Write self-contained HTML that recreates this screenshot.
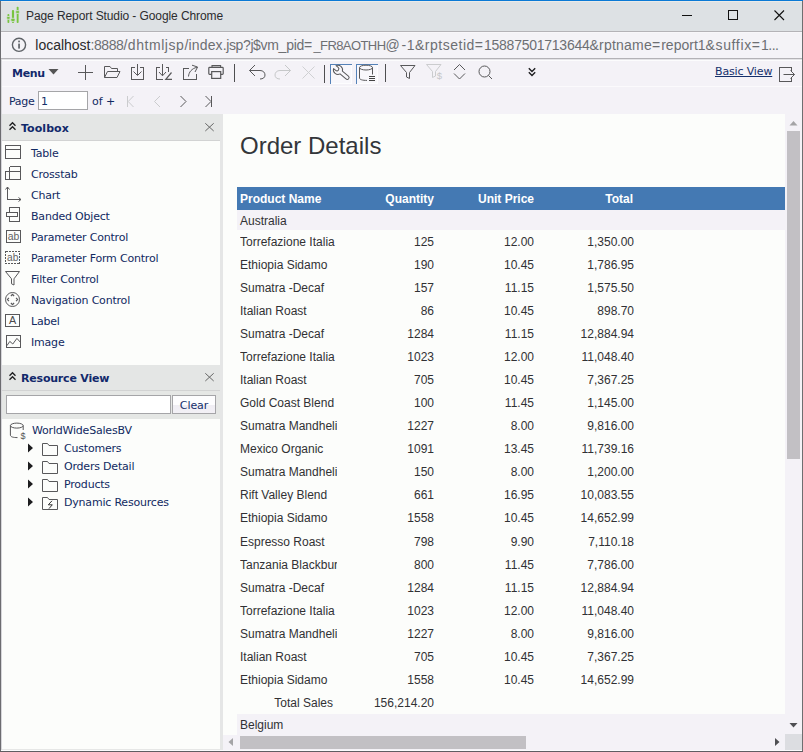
<!DOCTYPE html>
<html>
<head>
<meta charset="utf-8">
<title>Page Report Studio</title>
<style>
*{box-sizing:border-box;margin:0;padding:0}
html,body{width:803px;height:752px;overflow:hidden;background:#f4f2f7}
body{position:relative;font-family:"DejaVu Sans","Liberation Sans",sans-serif;font-size:11px;color:#15306b}
.abs{position:absolute}
#win{position:absolute;left:0;top:0;width:803px;height:752px;overflow:hidden;background:#f4f2f7}
/* chrome frame */
#topline{left:0;top:0;width:803px;height:2px;background:linear-gradient(#0b79d5 0,#0b79d5 50%,#eaebe9 50%)}
#titlebar{left:1px;top:1px;width:801px;height:30px;background:#dde1e4}
#title{left:26px;top:9px;font:12px "Liberation Sans",sans-serif;color:#2c2c2e;white-space:nowrap;letter-spacing:-0.09px}
#sep1{left:1px;top:31px;width:801px;height:1px;background:#b4b3b7}
#urlbar{left:1px;top:32px;width:801px;height:26px;background:#f4f3f7;border-top:1px solid #f8f7fa}
#url{left:0;top:37px;width:803px;height:18px;font:14px "Liberation Sans",sans-serif;color:#6d6f73}
#url span{position:absolute;top:0;white-space:pre}
#sep2{left:1px;top:58px;width:801px;height:3px;background:linear-gradient(#b3b2b6 0,#b3b2b6 33.3%,#e3e3e6 33.4%,#e3e3e6 66.6%,#fcfcfd 66.7%)}
#lborder{left:0;top:1px;width:1px;height:751px;background:#6c6c70}
#lborder2{left:1px;top:59px;width:1px;height:692px;background:#d6d6da}
#rborder{left:802px;top:1px;width:1px;height:751px;background:#6e6e70}
#bborder{left:0;top:751px;width:803px;height:1px;background:#5f5d61}
#bborder2{left:1px;top:750px;width:801px;height:1px;background:#fbfbfc}
/* toolbar */
#toolbar{left:2px;top:61px;width:799px;height:25px;background:#f4f2f7}
#menu{left:12px;top:67px;font-weight:bold;font-size:11px;color:#12296b;letter-spacing:-0.3px}
#basic{left:715px;top:65px;font-size:11px;color:#15306b;text-decoration:underline;white-space:nowrap;letter-spacing:-0.15px}
#pagerow{left:2px;top:87px;width:799px;height:27px}
.nav{font-size:11px;color:#112a62;white-space:nowrap}
#pinput{left:38px;top:91px;width:50px;height:19px;border:1px solid #a5a5a8;background:#fff;font-size:11px;color:#15306b;padding:3px 0 0 2px}
/* left panel */
#left{left:2px;top:114px;width:218px;height:636px;background:#fcfdfb;border-bottom:1px solid #e6e7e6}
#lsplit{left:220px;top:114px;width:3px;height:636px;background:#e5e6e6}
.phead{left:2px;width:218px;height:27px;background:#e4e6e5;border-bottom:1px solid #d2d3d3}
.ptitle{font-weight:bold;font-size:11px;color:#12296b;white-space:nowrap;letter-spacing:0.05px}
.item{left:31px;font-size:11px;color:#112a62;white-space:nowrap;letter-spacing:-0.2px}
/* report */
#page{left:223px;top:114px;width:562px;height:621px;background:#fcfdfb}
#rtitle{left:240px;top:132px;font:24px "Liberation Sans",sans-serif;color:#33363a;white-space:nowrap}
#thead{left:237px;top:187px;width:548px;height:23px;background:#4479b3}
.th{top:192px;font:bold 12px "Liberation Sans",sans-serif;color:#fff;white-space:nowrap}
.grp{left:237px;width:548px;height:20px;background:#f4f2f7}
.r{font:12px "Liberation Sans",sans-serif;color:#313134;white-space:nowrap}
.c1{left:240px;width:97px;overflow:hidden;text-align:left}
.c2{left:337px;width:97px;text-align:right}
.c3{left:437px;width:97px;text-align:right}
.c4{left:537px;width:97px;text-align:right}
</style>
</head>
<body>
<div id="win">
<div class="abs" id="titlebar"></div>
<div class="abs" id="topline"></div>
<div class="abs" id="title">Page Report Studio - Google Chrome</div>
<div class="abs" id="sep1"></div>
<div class="abs" id="urlbar"></div>
<div class="abs" id="url"><span style="left:35.3px;letter-spacing:-0.01px;color:#2a2a2c">localhost</span><span style="left:90.5px;letter-spacing:-0.43px">:8888</span><span style="left:123.4px;letter-spacing:0.55px">/dhtmljsp</span><span style="left:184.4px;letter-spacing:0.17px">/index</span><span style="left:222.8px;letter-spacing:-0.40px">.jsp</span><span style="left:243.0px;letter-spacing:-0.40px">?j$</span><span style="left:260.5px;letter-spacing:-0.27px">vm_pid</span><span style="left:304.0px;letter-spacing:1.21px">=</span><span style="left:313.4px;letter-spacing:-0.58px;font-size:13px;top:1px">_FR8AOTHH</span><span style="left:385.5px;letter-spacing:1.78px">@</span><span style="left:401.5px;letter-spacing:0.52px">-1</span><span style="left:415.0px;letter-spacing:0.51px">&amp;rptsetid</span><span style="left:474.8px;letter-spacing:1.01px">=</span><span style="left:484.0px;letter-spacing:-0.25px">15887501713644</span><span style="left:589.5px;letter-spacing:0.22px">&amp;rptname</span><span style="left:652.0px;letter-spacing:1.01px">=</span><span style="left:661.2px;letter-spacing:0.01px">report1</span><span style="left:705.6px;letter-spacing:0.63px">&amp;suffix</span><span style="left:751.8px;letter-spacing:1.01px">=</span><span style="left:761.0px;letter-spacing:-0.49px">1...</span></div>
<div class="abs" id="sep2"></div>
<div class="abs" id="toolbar"></div>
<div class="abs" style="left:1px;top:86px;width:801px;height:1px;background:#fbfafc"></div>
<div class="abs" id="menu">Menu</div>
<div class="abs" id="basic">Basic View</div>
<svg class="abs" style="left:0;top:0" width="803" height="120" viewBox="0 0 803 120" fill="none" stroke="#58585a" stroke-width="1">
<!-- menu arrow -->
<path d="M48.5 69 H58.5 L53.5 74.5 Z" fill="#555" stroke="none"/>
<!-- plus -->
<path d="M78 72.5 H93 M85.5 65 V80" shape-rendering="crispEdges"/>
<!-- folder open -->
<path d="M104.5 77.5 V66.5 H110 L111.5 68.5 H117.5 V71.5 M104.5 77.5 L107.5 71.5 H120 L117 77.5 Z" stroke-linejoin="round"/>
<!-- save -->
<path d="M135 67.5 H131.5 V79.5 H143.5 V67.5 H140" shape-rendering="crispEdges"/>
<path d="M137.5 64 V75 M133.5 71.5 L137.5 75.5 L141.5 71.5"/>
<!-- save as -->
<path d="M160 67.5 H156.5 V79.5 H163 M165.5 67.5 H168.5 V72" shape-rendering="crispEdges"/>
<path d="M162.5 64 V75.5 M159 72 L162.5 75.8 L166 72"/>
<path d="M171.5 72.5 L165.8 79.3 H172" stroke-width="1.2"/>
<!-- export -->
<path d="M189 68.5 H183.5 V79.5 H196.5 V74" shape-rendering="crispEdges"/>
<path d="M188.5 76.5 C188.8 72 191.8 68.6 197 67.2 M192 65.2 L197.6 67 L195 72"/>
<!-- print -->
<path d="M212 67 V65.6 H220.6 V67" stroke-width="1.1"/>
<rect x="208.8" y="67.4" width="14.4" height="7" rx="0.8" stroke-width="1.2"/>
<rect x="211.7" y="71.6" width="9" height="6.8" fill="#f4f2f7" stroke-width="1.2"/>
<!-- sep -->
<path d="M234.5 64 V82 M324.5 65 V83 M385.5 64 V82" stroke="#4e4e50" shape-rendering="crispEdges"/>
<!-- undo -->
<path d="M255 65 L249.5 70.5 L255 76 M249.5 70.5 H260 C263.2 70.5 265 72.6 265 75 C265 77.6 263 79 260 79"/>
<!-- redo (disabled) -->
<path d="M285 65 L290.5 70.5 L285 76 M290.5 70.5 H280 C276.8 70.5 275 72.6 275 75 C275 77.6 277 79 280 79" stroke="#c6c8c9"/>
<!-- delete (disabled) -->
<path d="M302.5 66.5 L314.5 78.5 M314.5 66.5 L302.5 78.5" stroke="#cfd0d2"/>
<!-- toggled buttons -->
<rect x="330" y="64" width="22" height="20" fill="#f8f7fb" stroke="none"/>
<path d="M330.5 84 V64.5 H352" stroke="#5582b8" shape-rendering="crispEdges"/>
<path d="M331 83.5 H351.5 V65" stroke="#fdfdfe" shape-rendering="crispEdges"/>
<rect x="356" y="64" width="22" height="20" fill="#f8f7fb" stroke="none"/>
<path d="M356.5 84 V64.5 H378" stroke="#5582b8" shape-rendering="crispEdges"/>
<path d="M357 83.5 H377.5 V65" stroke="#fdfdfe" shape-rendering="crispEdges"/>
<!-- wrench -->
<g transform="translate(338 69.8) rotate(40)">
<path d="M-4.2 -1.9 A4.6 4.6 0 0 1 4.2 -1.8 L12 -1.9 A1.9 1.9 0 0 1 12 1.9 L4.2 1.8 A4.6 4.6 0 0 1 -4.2 1.9 L-1.4 1.9 A1.9 1.9 0 0 0 -1.4 -1.9 Z" stroke-linejoin="round"/>
</g>
<!-- db -->
<ellipse cx="366" cy="67.6" rx="6.5" ry="2.4"/>
<path d="M359.5 67.6 V78 C359.5 79.6 362.5 80.4 367 80.4 M372.5 67.6 V74.5"/>
<path d="M369 76.5 H375 M369 78.5 H375 M369 80.5 H375" stroke="#444" shape-rendering="crispEdges"/>
<!-- filter -->
<path d="M400.5 65.5 H415 L409.5 72.5 V78.5 L406.5 77 V72.5 Z" stroke-linejoin="round"/>
<!-- filter $ (disabled) -->
<path d="M426.5 64.5 H441 L435.5 71.5 V76 L432.5 77.5 V71.5 Z" stroke="#cbccce" stroke-linejoin="round"/>
<text x="436.8" y="78.6" font-family="Liberation Sans, sans-serif" font-size="9.5" fill="#c6c7ca" stroke="none">$</text>
<!-- sort -->
<path d="M454 70 L459.5 64.5 L465 70 M454 73.5 L459.5 79 L465 73.5"/>
<!-- search -->
<circle cx="484.5" cy="71.5" r="5.5"/>
<path d="M488.5 75.5 L492 79"/>
<!-- more -->
<path d="M528.8 68.2 L532 71.4 L535.2 68.2 M528.8 72.2 L532 75.4 L535.2 72.2" stroke="#1d1d1f" stroke-width="1.4"/>
<!-- exit -->
<path d="M791.5 71 V67.5 H779.5 V81.5 H791.5 V78" shape-rendering="crispEdges"/>
<path d="M783.5 74.5 H794.5 M790.5 70.5 L794.5 74.5 L790.5 78.5"/>
<!-- page nav -->
<path d="M127.5 96 V107" stroke="#cbccce" shape-rendering="crispEdges"/>
<path d="M133.5 96 L128.2 101.5 L133.5 107 M160 96 L154.5 101.5 L160 107" stroke="#cbccce"/>
<path d="M180.5 96 L186 101.5 L180.5 107 M205.5 96 L211 101.5 L205.5 107"/>
<path d="M211.5 96 V107" shape-rendering="crispEdges"/>
</svg>

<div class="abs nav" style="left:9px;top:95px;letter-spacing:-0.3px">Page</div>
<div class="abs" id="pinput">1</div>
<div class="abs nav" style="left:92px;top:95px">of +</div>

<div class="abs" id="left"></div>
<div class="abs" id="lsplit"></div>
<div class="abs phead" style="top:114px"></div>
<div class="abs ptitle" style="left:21px;top:122px">Toolbox</div>
<div class="abs item" style="top:147px">Table</div>
<div class="abs item" style="top:168px">Crosstab</div>
<div class="abs item" style="top:189px">Chart</div>
<div class="abs item" style="top:210px">Banded Object</div>
<div class="abs item" style="top:231px">Parameter Control</div>
<div class="abs item" style="top:252px">Parameter Form Control</div>
<div class="abs item" style="top:273px">Filter Control</div>
<div class="abs item" style="top:294px">Navigation Control</div>
<div class="abs item" style="top:315px">Label</div>
<div class="abs item" style="top:336px">Image</div>
<svg class="abs" style="left:0;top:114px" width="224" height="250" viewBox="0 114 224 250" fill="none" stroke="#58585a" stroke-width="1">
<!-- collapse chevrons -->
<path d="M9.5 125.7 L12.5 122.7 L15.5 125.7 M9.5 129.7 L12.5 126.7 L15.5 129.7" stroke="#1d1d1f" stroke-width="1.3"/>
<!-- close x -->
<path d="M205.3 123.3 L213.7 131 M213.7 123.3 L205.3 131" stroke="#666"/>
<!-- table -->
<path d="M5.5 145.5 H20.5 V158.5 H5.5 Z M5.5 149.5 H20.5" shape-rendering="crispEdges"/>
<!-- crosstab -->
<path d="M9.5 166.5 H20.5 V179.5 H5.5 V171.5 H20.5 M9.5 166.5 V179.5" shape-rendering="crispEdges"/>
<!-- chart -->
<path d="M7.5 187 V199.5 H21" shape-rendering="crispEdges"/>
<path d="M5.5 189.5 L7.5 187 L9.5 189.5 M18.5 197.5 L21 199.5 L18.5 201.5"/>
<!-- banded -->
<path d="M9.5 207.5 H19.5 V221.5 H9.5 Z" shape-rendering="crispEdges"/>
<path d="M6.5 212.5 H17.5 V216.5 H6.5 Z" fill="#fcfdfb" shape-rendering="crispEdges"/>
<!-- param -->
<path d="M6.5 230.5 H20.5 V242.5 H6.5 Z" shape-rendering="crispEdges"/>
<text x="7.7" y="240.2" font-family="Liberation Sans, sans-serif" font-size="10.4" fill="#636365" stroke="none">ab</text>
<!-- param form -->
<path d="M5.5 251.5 H19.5 V263.5 H5.5 Z" stroke-dasharray="2 1" shape-rendering="crispEdges"/>
<text x="7" y="261.2" font-family="Liberation Sans, sans-serif" font-size="10.2" fill="#636365" stroke="none">ab</text>
<!-- filter -->
<path d="M5.5 271.5 H19.5 L14 278.8 V285 L11.5 283.8 V278.8 Z" stroke-linejoin="round"/>
<!-- navigation -->
<circle cx="12.5" cy="299.5" r="7"/>
<path d="M10.9 296 L12.5 294.3 L14.1 296 M10.9 303 L12.5 304.7 L14.1 303 M9 297.9 L7.3 299.5 L9 301.1 M16 297.9 L17.7 299.5 L16 301.1" stroke-width="1.1"/>
<!-- label -->
<path d="M5.5 314.5 H19.5 V326.5 H5.5 Z" shape-rendering="crispEdges"/>
<text x="8.9" y="324.4" font-family="Liberation Sans, sans-serif" font-size="10.8" fill="#4a4a4c" stroke="none">A</text>
<!-- image -->
<path d="M6.5 335.5 H20.5 V347.5 H6.5 Z" shape-rendering="crispEdges"/>
<path d="M6.9 345.7 L9.8 341.4 L12.8 344 L16.9 338.4 L20.2 342"/>
</svg>

<div class="abs phead" style="top:365px;height:26px"></div>
<div class="abs ptitle" style="left:21px;top:372px;letter-spacing:-0.2px">Resource View</div>
<div class="abs" style="left:2px;top:391px;width:218px;height:28px;background:#e5e7e5"></div>
<div class="abs" style="left:6px;top:395px;width:165px;height:19px;border:1px solid #a5a5a8;background:#fff"></div>
<div class="abs" style="left:172px;top:395px;width:44px;height:19px;border:1px solid #a5a5a8;background:linear-gradient(#fdfdfe 0,#fdfdfe 50%,#efedf3 51%,#f3f1f6 100%);font-size:11px;color:#15306b;text-align:center;padding-top:3px;letter-spacing:-0.1px">Clear</div>
<div class="abs item" style="left:32px;top:424px">WorldWideSalesBV</div>
<div class="abs item" style="left:64px;top:442px">Customers</div>
<div class="abs item" style="left:64px;top:460px">Orders Detail</div>
<div class="abs item" style="left:64px;top:478px">Products</div>
<div class="abs item" style="left:64px;top:496px">Dynamic Resources</div>
<svg class="abs" style="left:0;top:364px" width="224" height="160" viewBox="0 364 224 160" fill="none" stroke="#58585a" stroke-width="1">
<path d="M9.5 375.7 L12.5 372.7 L15.5 375.7 M9.5 379.7 L12.5 376.7 L15.5 379.7" stroke="#1d1d1f" stroke-width="1.3"/>
<path d="M205.3 373.3 L213.7 381 M213.7 373.3 L205.3 381" stroke="#666"/>
<!-- db $ -->
<ellipse cx="16.8" cy="425.6" rx="6.4" ry="2.5"/>
<path d="M10.4 425.6 V435 C10.4 436.8 13 437.6 17.5 437.6 M23.2 425.6 V430"/>
<text x="20.6" y="438.6" font-family="Liberation Sans, sans-serif" font-size="9" fill="#555" stroke="none">$</text>
<!-- tree arrows -->
<path d="M28 443.5 L33 448 L28 452.5 Z M28 461.5 L33 466 L28 470.5 Z M28 479.5 L33 484 L28 488.5 Z M28 497.5 L33 502 L28 506.5 Z" fill="#1d1d1f" stroke="none"/>
<!-- folders -->
<path d="M42.5 455.5 V443.5 H47.5 L49 445.5 H57.5 V455.5 Z M42.5 473.5 V461.5 H47.5 L49 463.5 H57.5 V473.5 Z M42.5 491.5 V479.5 H47.5 L49 481.5 H57.5 V491.5 Z M42.5 509.5 V497.5 H47.5 L49 499.5 H57.5 V509.5 Z"/>
<path d="M52 500.8 L48.3 504.8 H52.3 L49 508.6" stroke="#333" stroke-width="1"/>
</svg>

<div class="abs" id="page"></div>
<div class="abs" id="rtitle">Order Details</div>
<div class="abs" id="thead"></div>
<div class="abs th" style="left:240px">Product Name</div>
<div class="abs th c2" >Quantity</div>
<div class="abs th c3" >Unit Price</div>
<div class="abs th c4" style="left:536px">Total</div>
<div class="abs grp" style="top:210px"></div>
<div class="abs r" style="left:240px;top:214px">Australia</div>
<div class="abs r c1" style="top:235px">Torrefazione Italia</div><div class="abs r c2" style="top:235px">125</div><div class="abs r c3" style="top:235px">12.00</div><div class="abs r c4" style="top:235px">1,350.00</div>
<div class="abs r c1" style="top:258px">Ethiopia Sidamo</div><div class="abs r c2" style="top:258px">190</div><div class="abs r c3" style="top:258px">10.45</div><div class="abs r c4" style="top:258px">1,786.95</div>
<div class="abs r c1" style="top:281px">Sumatra -Decaf</div><div class="abs r c2" style="top:281px">157</div><div class="abs r c3" style="top:281px">11.15</div><div class="abs r c4" style="top:281px">1,575.50</div>
<div class="abs r c1" style="top:304px">Italian Roast</div><div class="abs r c2" style="top:304px">86</div><div class="abs r c3" style="top:304px">10.45</div><div class="abs r c4" style="top:304px">898.70</div>
<div class="abs r c1" style="top:327px">Sumatra -Decaf</div><div class="abs r c2" style="top:327px">1284</div><div class="abs r c3" style="top:327px">11.15</div><div class="abs r c4" style="top:327px">12,884.94</div>
<div class="abs r c1" style="top:350px">Torrefazione Italia</div><div class="abs r c2" style="top:350px">1023</div><div class="abs r c3" style="top:350px">12.00</div><div class="abs r c4" style="top:350px">11,048.40</div>
<div class="abs r c1" style="top:373px">Italian Roast</div><div class="abs r c2" style="top:373px">705</div><div class="abs r c3" style="top:373px">10.45</div><div class="abs r c4" style="top:373px">7,367.25</div>
<div class="abs r c1" style="top:396px">Gold Coast Blend</div><div class="abs r c2" style="top:396px">100</div><div class="abs r c3" style="top:396px">11.45</div><div class="abs r c4" style="top:396px">1,145.00</div>
<div class="abs r c1" style="top:419px">Sumatra Mandheling</div><div class="abs r c2" style="top:419px">1227</div><div class="abs r c3" style="top:419px">8.00</div><div class="abs r c4" style="top:419px">9,816.00</div>
<div class="abs r c1" style="top:442px">Mexico Organic</div><div class="abs r c2" style="top:442px">1091</div><div class="abs r c3" style="top:442px">13.45</div><div class="abs r c4" style="top:442px">11,739.16</div>
<div class="abs r c1" style="top:465px">Sumatra Mandheling</div><div class="abs r c2" style="top:465px">150</div><div class="abs r c3" style="top:465px">8.00</div><div class="abs r c4" style="top:465px">1,200.00</div>
<div class="abs r c1" style="top:488px">Rift Valley Blend</div><div class="abs r c2" style="top:488px">661</div><div class="abs r c3" style="top:488px">16.95</div><div class="abs r c4" style="top:488px">10,083.55</div>
<div class="abs r c1" style="top:511px">Ethiopia Sidamo</div><div class="abs r c2" style="top:511px">1558</div><div class="abs r c3" style="top:511px">10.45</div><div class="abs r c4" style="top:511px">14,652.99</div>
<div class="abs r c1" style="top:535px">Espresso Roast</div><div class="abs r c2" style="top:535px">798</div><div class="abs r c3" style="top:535px">9.90</div><div class="abs r c4" style="top:535px">7,110.18</div>
<div class="abs r c1" style="top:558px">Tanzania Blackburn</div><div class="abs r c2" style="top:558px">800</div><div class="abs r c3" style="top:558px">11.45</div><div class="abs r c4" style="top:558px">7,786.00</div>
<div class="abs r c1" style="top:581px">Sumatra -Decaf</div><div class="abs r c2" style="top:581px">1284</div><div class="abs r c3" style="top:581px">11.15</div><div class="abs r c4" style="top:581px">12,884.94</div>
<div class="abs r c1" style="top:604px">Torrefazione Italia</div><div class="abs r c2" style="top:604px">1023</div><div class="abs r c3" style="top:604px">12.00</div><div class="abs r c4" style="top:604px">11,048.40</div>
<div class="abs r c1" style="top:627px">Sumatra Mandheling</div><div class="abs r c2" style="top:627px">1227</div><div class="abs r c3" style="top:627px">8.00</div><div class="abs r c4" style="top:627px">9,816.00</div>
<div class="abs r c1" style="top:650px">Italian Roast</div><div class="abs r c2" style="top:650px">705</div><div class="abs r c3" style="top:650px">10.45</div><div class="abs r c4" style="top:650px">7,367.25</div>
<div class="abs r c1" style="top:673px">Ethiopia Sidamo</div><div class="abs r c2" style="top:673px">1558</div><div class="abs r c3" style="top:673px">10.45</div><div class="abs r c4" style="top:673px">14,652.99</div>
<div class="abs r" style="left:237px;width:96px;text-align:right;top:696px">Total Sales</div><div class="abs r c2" style="top:696px">156,214.20</div>
<div class="abs grp" style="top:714px;height:21px"></div>
<div class="abs r" style="left:240px;top:718px">Belgium</div>
<div class="abs" style="left:787px;top:131px;width:13px;height:328px;background:#c2c0c4"></div>
<div class="abs" style="left:240px;top:736px;width:286px;height:13px;background:#c2c0c4"></div>
<div class="abs" style="left:785px;top:734px;width:17px;height:16px;background:#dcdde1"></div>
<svg class="abs" style="left:0;top:0" width="803" height="752" viewBox="0 0 803 752" fill="none" stroke="none">
<path d="M789.5 125.5 L793.5 121 L797.5 125.5 Z" fill="#a4a4a6"/>
<path d="M789.5 723 L793.5 727.5 L797.5 723 Z" fill="#4f4f53"/>
<path d="M233 738 L228.5 742 L233 746 Z" fill="#a4a4a6"/>
<path d="M775 738 L779.5 742 L775 746 Z" fill="#4f4f53"/>
<!-- app icon -->
<g fill="#78c440">
<rect x="7.5" y="13.9" width="1.8" height="9.1" rx="0.8"/><rect x="6.6" y="16.5" width="3.6" height="2.8" rx="1.2" stroke="#dde1e4" stroke-width="0.8"/>
<rect x="11.9" y="10.1" width="2.2" height="12.9" rx="0.9"/><rect x="10.8" y="18.3" width="4.3" height="3.2" rx="1.3" stroke="#dde1e4" stroke-width="0.8"/>
<rect x="16.7" y="6.8" width="1.9" height="16.2" rx="0.8"/><rect x="15.6" y="10.6" width="3.9" height="2.8" rx="1.2" stroke="#dde1e4" stroke-width="0.8"/>
</g>
<!-- window controls -->
<path d="M682 15.5 H692" stroke="#111" shape-rendering="crispEdges"/>
<rect x="728.5" y="10.5" width="9" height="9" stroke="#111" shape-rendering="crispEdges"/>
<path d="M774.5 10.5 L784 20 M784 10.5 L774.5 20" stroke="#111" stroke-width="1.1"/>
<!-- info icon -->
<circle cx="19" cy="44.8" r="6.6" stroke="#5f6368" stroke-width="1.4"/>
<rect x="18.2" y="43.6" width="1.7" height="5" fill="#5f6368"/><rect x="18.2" y="40.6" width="1.7" height="1.7" fill="#5f6368"/>
</svg>

<div class="abs" id="lborder"></div>
<div class="abs" id="lborder2"></div>
<div class="abs" id="rborder"></div>
<div class="abs" id="bborder2"></div>
<div class="abs" id="bborder"></div>
</div>
</body>
</html>
